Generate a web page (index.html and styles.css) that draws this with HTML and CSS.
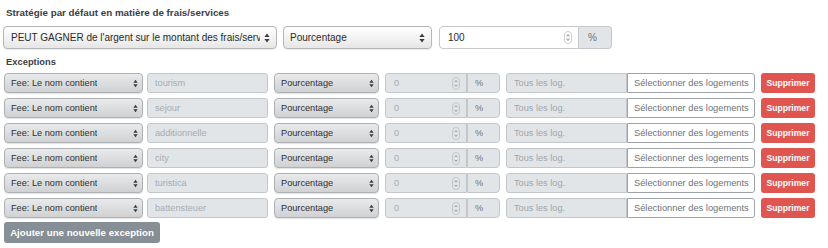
FILE: index.html
```html
<!DOCTYPE html>
<html lang="fr">
<head>
<meta charset="UTF-8">
<meta name="viewport" content="width=device-width, initial-scale=1.0">
<title>Stratégie frais/services</title>
<link rel="stylesheet" href="styles.css">
</head>
<body>
<div class="fee-strategy">
    <h4 class="section-title">Stratégie par défaut en matière de frais/services</h4>

    <div class="main-row">
        <div class="select select-light select-mode">
            <span>PEUT GAGNER de l'argent sur le montant des frais/serv</span>
            <svg class="arrow" viewBox="0 0 6 10" width="6" height="10"><path d="M3 0.5 L5.6 4 H0.4Z M3 9.5 L5.6 6 H0.4Z" fill="#3c3c3c"/></svg>
        </div>
        <div class="select select-light select-type">
            <span>Pourcentage</span>
            <svg class="arrow" viewBox="0 0 6 10" width="6" height="10"><path d="M3 0.5 L5.6 4 H0.4Z M3 9.5 L5.6 6 H0.4Z" fill="#3c3c3c"/></svg>
        </div>
        <div class="input-group">
            <div class="input input-main">
                <span>100</span>
                <svg class="spin" viewBox="0 0 8 13" width="8" height="13"><rect x="0.5" y="0.5" width="7" height="12" rx="3.5" fill="none" stroke="#cfcfcf"/><path d="M2.6 5.2 L4 3.6 L5.4 5.2 M2.6 7.8 L4 9.4 L5.4 7.8" fill="none" stroke="#6d6d6d" stroke-width="0.9"/></svg>
            </div>
            <div class="addon addon-main">%</div>
        </div>
    </div>

    <h4 class="section-title label-exceptions">Exceptions</h4>

    <div class="exceptions" id="exceptions"></div>

    <button class="btn-add">Ajouter une nouvelle exception</button>
</div>

<script>
const keywords = ['tourism', 'sejour', 'additionnelle', 'city', 'turistica', 'battensteuer'];

const arrow = '<svg class="arrow" viewBox="0 0 6 10" width="6" height="10"><path d="M3 0.5 L5.6 4 H0.4Z M3 9.5 L5.6 6 H0.4Z" fill="#3c3c3c"/></svg>';
const spin = '<svg class="spin" viewBox="0 0 8 13" width="8" height="13"><rect x="0.5" y="0.5" width="7" height="12" rx="3.5" fill="none" stroke="#c4c7ca"/><path d="M2.6 5.2 L4 3.6 L5.4 5.2 M2.6 7.8 L4 9.4 L5.4 7.8" fill="none" stroke="#8a8f94" stroke-width="0.9"/></svg>';

const list = document.getElementById('exceptions');
list.innerHTML = keywords.map(word => `
    <div class="exception-row">
        <div class="select select-gray sel-rule"><span>Fee: Le nom contient</span>${arrow}</div>
        <div class="input input-disabled in-word">${word}</div>
        <div class="select select-gray sel-type"><span>Pourcentage</span>${arrow}</div>
        <div class="input-group">
            <div class="input input-disabled in-num"><span>0</span>${spin}</div>
            <div class="addon addon-small">%</div>
        </div>
        <div class="input-group">
            <div class="input input-disabled in-all">Tous les log.</div>
            <div class="pick">Sélectionner des logements</div>
        </div>
        <button class="btn-delete">Supprimer</button>
    </div>
`).join('');
</script>
</body>
</html>
```

FILE: styles.css
```css
body {
    margin: 0;
    padding: 0;
    font-family: "Liberation Sans", Arial, sans-serif;
    background: #fff;
    color: #212529;
}

.fee-strategy {
    padding: 6px 4px 0 4px;
}

.section-title {
    margin: 0 0 6px 2px;
    font-size: 9.8px;
    line-height: 14px;
    font-weight: bold;
    color: #3b4046;
}

.main-row {
    display: flex;
    align-items: center;
    height: 23px;
    margin-left: -1px;
    margin-bottom: 6px;
}

.label-exceptions {
    font-size: 9.4px;
    margin-bottom: 4px;
}

/* fake native selects */
.select {
    box-sizing: border-box;
    display: flex;
    align-items: center;
    justify-content: space-between;
    border: 1px solid #b4b6b8;
    border-radius: 4px;
    white-space: nowrap;
    overflow: hidden;
}

.select span {
    overflow: hidden;
}

.select-light {
    height: 23px;
    padding: 0 6px 0 7px;
    font-size: 10px;
    color: #2b2b2b;
    background: linear-gradient(#ffffff, #f1f1f1 60%, #e6e6e6);
    box-shadow: 0 1px 1px rgba(0, 0, 0, 0.08);
}

.select-mode {
    width: 274px;
    margin-right: 6px;
}

.select-type {
    width: 149px;
    margin-right: 7px;
    padding-left: 6px;
}

.select-gray {
    height: 20px;
    padding: 0 4px 0 6px;
    font-size: 9.2px;
    color: #2f3133;
    background: linear-gradient(#e9eaeb, #dadcde 55%, #cfd1d3);
    border-color: #aeb1b4;
    box-shadow: 0 1px 1px rgba(0, 0, 0, 0.12);
}

.arrow {
    flex-shrink: 0;
    margin-left: 4px;
}

.select-gray .arrow {
    width: 5px;
    height: 9px;
}

.input-group {
    display: flex;
}

.input {
    box-sizing: border-box;
    display: flex;
    align-items: center;
    justify-content: space-between;
    border: 1px solid #c3c7cb;
    white-space: nowrap;
}

.input-main {
    width: 140px;
    height: 23px;
    padding: 0 6px 0 8px;
    font-size: 10px;
    color: #2b2b2b;
    background: #fff;
    border-radius: 4px 0 0 4px;
    border-color: #c6c9cc;
}

.addon {
    box-sizing: border-box;
    display: flex;
    align-items: center;
    background: #e2e5e8;
    border: 1px solid #c3c7cb;
    border-left: none;
    border-radius: 0 4px 4px 0;
    color: #6d747a;
}

.addon-main {
    width: 33px;
    height: 23px;
    padding-left: 9px;
    font-size: 10px;
}

.addon-small {
    width: 33px;
    height: 20px;
    padding-left: 7px;
    font-size: 9.2px;
    border-left: 1px solid #c3c7cb;
}

.exceptions {
    display: flex;
    flex-direction: column;
    gap: 5px;
}

.exception-row {
    display: flex;
    align-items: center;
    height: 20px;
}

.input-disabled {
    height: 20px;
    background: #e2e5e8;
    color: #a6acb2;
    font-size: 9.2px;
    border-radius: 3px;
}

.sel-rule {
    width: 139px;
    margin-right: 4px;
}

.in-word {
    width: 121px;
    padding-left: 7px;
    margin-right: 6px;
}

.sel-type {
    width: 105px;
    margin-right: 6px;
}

.in-num {
    width: 82px;
    padding: 0 6px 0 8px;
    border-radius: 3px 0 0 3px;
}

.exception-row .input-group {
    margin-right: 6px;
}

.in-all {
    width: 121px;
    padding-left: 7px;
    border-radius: 3px 0 0 3px;
    color: #9fa5ab;
}

.pick {
    box-sizing: border-box;
    display: flex;
    align-items: center;
    width: 128px;
    height: 20px;
    padding-left: 6px;
    font-size: 9.3px;
    color: #6c7379;
    background: #fff;
    border: 1px solid #9da3a8;
    border-radius: 0 3px 3px 0;
    white-space: nowrap;
}

.btn-delete {
    box-sizing: border-box;
    width: 54px;
    height: 20px;
    padding: 0;
    font-family: inherit;
    font-size: 8.6px;
    font-weight: bold;
    color: #fff;
    background: #df5650;
    border: none;
    border-radius: 3px;
}

.btn-add {
    box-sizing: border-box;
    display: block;
    margin-top: 4px;
    width: 156px;
    height: 21px;
    padding: 0;
    font-family: inherit;
    font-size: 9.7px;
    font-weight: bold;
    color: #fff;
    background: #868e96;
    border: none;
    border-radius: 3px;
}
```
